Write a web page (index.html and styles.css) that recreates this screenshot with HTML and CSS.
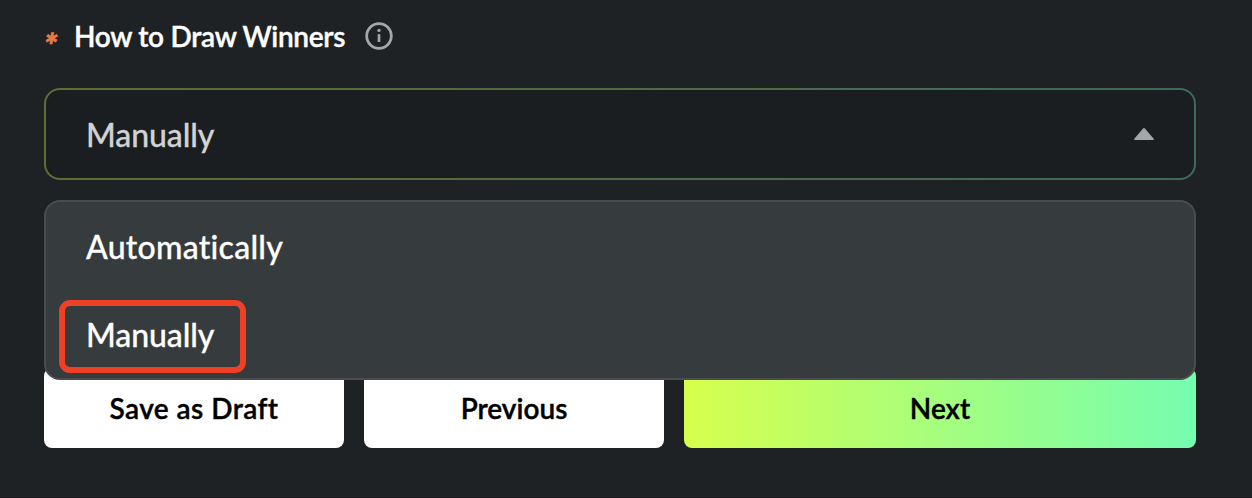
FILE: index.html
```html
<!DOCTYPE html>
<html lang="en">
<head>
<meta charset="utf-8">
<title>How to Draw Winners</title>
<link rel="stylesheet" href="styles.css">
</head>
<body>
<main class="form">
  <div class="label">
    <span class="required"><span class="star">*</span></span>
    <span class="label-text">How to Draw Winners</span>
    <svg class="info" viewBox="0 0 28 28" fill="none">
      <circle cx="14" cy="14" r="12.3" stroke="#a5a6a7" stroke-width="2.8"/>
      <circle cx="14" cy="8.4" r="1.7" fill="#a5a6a7"/>
      <path d="M14 12.2V20" stroke="#a5a6a7" stroke-width="2.7"/>
    </svg>
  </div>
  <div class="field">
    <div class="select">
      <span class="short">Manually</span>
      <svg class="caret" viewBox="0 0 20 12"><path d="M9.1.5Q10-.4 10.9.5L19.7 10.700Q20.200 12 19 12H1Q-.2 12 .3 10.700Z" fill="#a5a6a7"/></svg>
    </div>
    <ul class="menu">
      <li class="option long">Automatically</li>
      <li class="option short">Manually<span class="highlight"></span></li>
    </ul>
  </div>
  <div class="actions">
    <button class="btn save">Save as Draft</button>
    <button class="btn prev">Previous</button>
    <button class="btn next">Next</button>
  </div>
</main>
</body>
</html>
```
FILE: styles.css
```css
* { box-sizing: border-box; }
body {
  margin: 0;
  height: 498px;
  background: #1e2225;
  border-bottom: 1px solid #17191c;
  color: #fff;
  font-family: Lato, "Liberation Sans", sans-serif;
  font-variant-ligatures: none;
  overflow: hidden;
}
.form { padding: 16px 56px 0 44px; }
.label { display: flex; align-items: center; height: 40px; }
.required { width: 30px; color: #e57a45; font: 900 32px/40px Lato, sans-serif; padding-top: 18px; }
.star { display: inline-block; -webkit-text-stroke: .8px; transform: skewX(-8deg); }
.label-text {
  width: 291px;
  font-size: 28px;
  font-weight: 600;
  line-height: 40px;
  letter-spacing: -.3px;
  white-space: nowrap;
  -webkit-text-stroke: .4px;
}
.info { width: 28px; height: 28px; }
.field { position: relative; margin-top: 32px; }
.select {
  display: flex;
  align-items: center;
  justify-content: space-between;
  height: 92px;
  padding: 0 40px;
  border: 2px solid transparent;
  border-radius: 16px;
  background: linear-gradient(#1a1e21, #1a1e21) padding-box, linear-gradient(90deg, #5f6d35, #3c6b56) border-box;
  color: #d1d2d3;
  font-size: 32px;
  font-weight: 500;
  -webkit-text-stroke: .3px;
}
.caret { width: 20px; height: 12px; }
.menu {
  position: absolute;
  top: 112px;
  left: 0;
  right: 0;
  height: 180px;
  margin: 0;
  padding: 0;
  list-style: none;
  background: #363b3d;
  border: 2px solid #4a4d50;
  border-radius: 16px;
}
.option {
  position: relative;
  height: 88px;
  padding-left: 40px;
  font-size: 32px;
  font-weight: 500;
  line-height: 90px;
  -webkit-text-stroke: .3px;
}
.short { letter-spacing: -.1px; }
.long { letter-spacing: .25px; }
.highlight {
  position: absolute;
  left: 13px;
  top: 10px;
  width: 187px;
  height: 73px;
  border: 6px solid #ed4025;
  border-radius: 11px;
}
.actions { display: grid; grid-template-columns: 300px 300px 512px; gap: 20px; margin-top: 188px; }
.btn {
  height: 80px;
  padding: 0;
  border: 0;
  border-radius: 8px;
  background: #fff;
  color: #000;
  font: 600 28px/80px Lato, "Liberation Sans", sans-serif;
  -webkit-text-stroke: .4px;
}
.save { letter-spacing: .45px; }
.next { background: linear-gradient(90deg, #d6ff4c, #75fdb0); }
```
